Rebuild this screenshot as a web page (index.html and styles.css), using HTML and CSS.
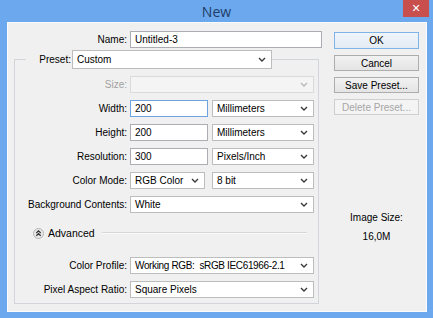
FILE: index.html
```html
<!DOCTYPE html>
<html lang="en">
<head>
  <meta charset="UTF-8" />
  <meta name="viewport" content="width=device-width, initial-scale=1.0" />
  <title>New</title>
  <link rel="stylesheet" href="styles.css">
</head>
<body>
  <div class="window">
    <div class="titlebar">
      <div class="title">New</div>
      <div class="close-btn">&#x2715;</div>
    </div>

    <div class="client">
      <div class="main">
        <div class="name-row">
          <label>Name:</label>
          <div class="field">Untitled-3</div>
        </div>

        <fieldset class="group">
          <legend>
            <div class="preset-row">
              <label>Preset:</label>
              <div class="select preset-select">
                <span>Custom</span>
                <svg class="chev" width="8" height="5" viewBox="0 0 8 5"><path d="M1 1 L4 4 L7 1" /></svg>
              </div>
            </div>
          </legend>

          <div class="row">
            <label class="disabled">Size:</label>
            <div class="select select-disabled">
              <span></span>
              <svg class="chev" width="8" height="5" viewBox="0 0 8 5"><path d="M1 1 L4 4 L7 1" /></svg>
            </div>
          </div>

          <div class="row">
            <label>Width:</label>
            <div class="pair">
              <div class="field field-num focused">200</div>
              <div class="select">
                <span>Millimeters</span>
                <svg class="chev" width="8" height="5" viewBox="0 0 8 5"><path d="M1 1 L4 4 L7 1" /></svg>
              </div>
            </div>
          </div>

          <div class="row">
            <label>Height:</label>
            <div class="pair">
              <div class="field field-num">200</div>
              <div class="select">
                <span>Millimeters</span>
                <svg class="chev" width="8" height="5" viewBox="0 0 8 5"><path d="M1 1 L4 4 L7 1" /></svg>
              </div>
            </div>
          </div>

          <div class="row">
            <label>Resolution:</label>
            <div class="pair">
              <div class="field field-num">300</div>
              <div class="select">
                <span>Pixels/Inch</span>
                <svg class="chev" width="8" height="5" viewBox="0 0 8 5"><path d="M1 1 L4 4 L7 1" /></svg>
              </div>
            </div>
          </div>

          <div class="row">
            <label>Color Mode:</label>
            <div class="pair pair-mode">
              <div class="select select-mode">
                <span>RGB Color</span>
                <svg class="chev" width="8" height="5" viewBox="0 0 8 5"><path d="M1 1 L4 4 L7 1" /></svg>
              </div>
              <div class="select">
                <span>8 bit</span>
                <svg class="chev" width="8" height="5" viewBox="0 0 8 5"><path d="M1 1 L4 4 L7 1" /></svg>
              </div>
            </div>
          </div>

          <div class="row">
            <label>Background Contents:</label>
            <div class="select">
              <span>White</span>
              <svg class="chev" width="8" height="5" viewBox="0 0 8 5"><path d="M1 1 L4 4 L7 1" /></svg>
            </div>
          </div>

          <div class="advanced">
            <svg class="toggle" width="11" height="11" viewBox="0 0 11 11">
              <circle cx="5.5" cy="5.5" r="5" fill="#e9e9e9" stroke="#b4b4b4" />
              <path d="M3.3 5 L5.5 2.9 L7.7 5 M3.3 7.8 L5.5 5.7 L7.7 7.8" fill="none" stroke="#333" stroke-width="1.2" />
            </svg>
            <span class="advanced-text">Advanced</span>
            <div class="rule"></div>
          </div>

          <div class="row row-profile">
            <label>Color Profile:</label>
            <div class="select">
              <span class="tight">Working RGB:&nbsp; sRGB IEC61966-2.1</span>
              <svg class="chev" width="8" height="5" viewBox="0 0 8 5"><path d="M1 1 L4 4 L7 1" /></svg>
            </div>
          </div>

          <div class="row">
            <label>Pixel Aspect Ratio:</label>
            <div class="select">
              <span>Square Pixels</span>
              <svg class="chev" width="8" height="5" viewBox="0 0 8 5"><path d="M1 1 L4 4 L7 1" /></svg>
            </div>
          </div>
        </fieldset>
      </div>

      <div class="side">
        <div class="btn btn-default">OK</div>
        <div class="btn">Cancel</div>
        <div class="btn">Save Preset...</div>
        <div class="btn btn-disabled">Delete Preset...</div>

        <div class="image-size">
          <div>Image Size:</div>
          <div>16,0M</div>
        </div>
      </div>
    </div>
  </div>
</body>
</html>
```

FILE: styles.css
```css
* {
  margin: 0;
  padding: 0;
  box-sizing: border-box;
}

body {
  width: 433px;
  height: 318px;
  overflow: hidden;
  background: #6ba8ee;
  font-family: 'Liberation Sans', Arial, sans-serif;
  font-size: 10px;
  color: #000;
}

.window {
  display: flex;
  flex-direction: column;
  width: 433px;
  height: 318px;
  background: #6ba8ee;
}

.titlebar {
  position: relative;
  flex-shrink: 0;
  height: 22px;
  display: flex;
  justify-content: center;
  align-items: center;
}

.title {
  font-family: 'Open Sans', 'Noto Sans', sans-serif;
  font-size: 14px;
  color: #1f3d66;
  padding-top: 1px;
}

.close-btn {
  position: absolute;
  top: 0;
  right: 4px;
  width: 26px;
  height: 17px;
  background: #c94f4f;
  color: #fff;
  font-family: 'DejaVu Sans', sans-serif;
  font-size: 11px;
  font-weight: bold;
  display: flex;
  justify-content: center;
  align-items: center;
}

.client {
  flex: 1;
  margin: 0 6px 6px 7px;
  padding: 9px 8px 0 7px;
  background: #f0f0f0;
  box-shadow: inset 1px 1px 0 #fbfbfb, inset -1px -1px 0 #fbfbfb;
  display: flex;
  gap: 12px;
}

.main {
  width: 308px;
  display: flex;
  flex-direction: column;
}

label {
  text-align: right;
  white-space: nowrap;
}

.disabled {
  color: #a2a2a2;
}

.name-row {
  display: grid;
  grid-template-columns: 113px 192px;
  column-gap: 3px;
  align-items: center;
  height: 17px;
}

.field {
  height: 17px;
  padding: 0 4px;
  background: #fff;
  border: 1px solid #abadb3;
  display: flex;
  align-items: center;
  white-space: nowrap;
}

.field-num {
  width: 78px;
  flex-shrink: 0;
}

.focused {
  border-color: #6ea5e0;
}

.select {
  height: 17px;
  padding: 0 5px 0 4px;
  background: #fff;
  border: 1px solid #bdbdbd;
  display: flex;
  justify-content: space-between;
  align-items: center;
  white-space: nowrap;
  flex: 1;
}

.tight {
  letter-spacing: -0.35px;
}

.chev path {
  fill: none;
  stroke: #3a3a3a;
  stroke-width: 1.4;
}

.select-disabled {
  background: #f4f4f4;
  border-color: #dadada;
}

.select-disabled .chev path {
  stroke: #b8b8b8;
}

.group {
  margin-top: 2px;
  width: 305px;
  min-width: 0;
  border: 1px solid #d2d6da;
  padding: 0 4px 5px 0;
}

.group legend {
  margin-left: 11px;
  padding: 0;
}

.preset-row {
  display: flex;
  align-items: center;
  gap: 1px;
  height: 19px;
}

.preset-row label {
  width: 45px;
}

.preset-select {
  width: 200px;
  height: 19px;
  flex: none;
}

.row {
  display: grid;
  grid-template-columns: 112px 184px;
  column-gap: 3px;
  align-items: center;
  height: 17px;
  margin-top: 7px;
}

.pair {
  display: flex;
  gap: 4px;
}

.pair-mode {
  gap: 7px;
}

.select-mode {
  width: 75px;
  flex: none;
}

.advanced {
  display: flex;
  align-items: center;
  height: 18px;
  margin-top: 11px;
  padding: 0 7px 0 18px;
}

.advanced-text {
  margin-left: 4px;
  font-size: 10.5px;
}

.rule {
  flex: 1;
  margin-left: 7px;
  border-top: 1px solid #d6d6d6;
  border-bottom: 1px solid #fbfbfb;
}

.row-profile {
  margin-top: 15px;
}

.side {
  width: 85px;
  padding-top: 1px;
  display: flex;
  flex-direction: column;
  gap: 6px;
}

.btn {
  height: 16px;
  border: 1px solid #adadad;
  background: linear-gradient(#f2f2f2, #e4e4e4);
  display: flex;
  justify-content: center;
  align-items: center;
  white-space: nowrap;
}

.btn-default {
  height: 17px;
  border-color: #7fb2e6;
  background: linear-gradient(#f0f5fb, #e3ebf4);
}

.btn-disabled {
  color: #a6a6a6;
  border-color: #cfcfcf;
  background: #f4f4f4;
}

.image-size {
  margin-top: 87px;
  text-align: center;
  line-height: 19px;
}
```
